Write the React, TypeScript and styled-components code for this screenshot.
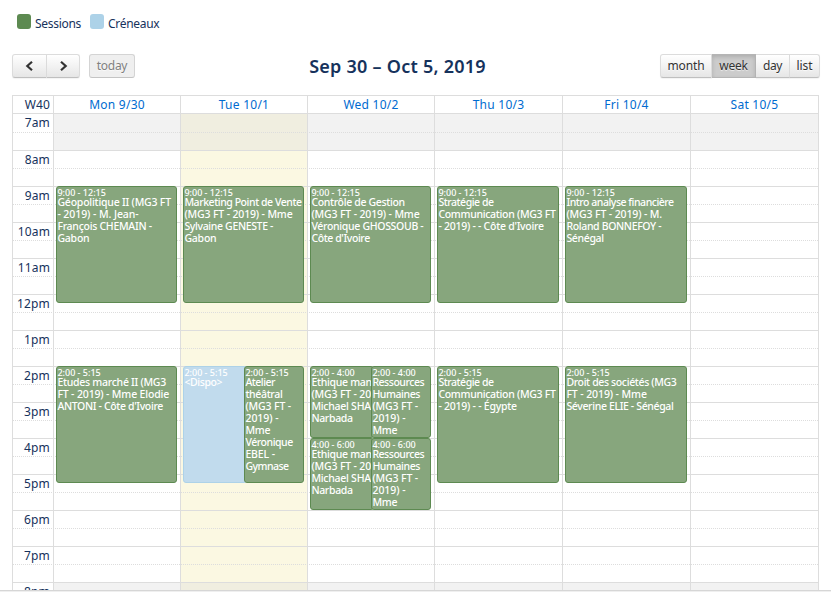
import React from "react";
import styled, { createGlobalStyle, css } from "styled-components";

const GlobalStyle = createGlobalStyle`
  * { box-sizing: border-box; }
  html, body { margin: 0; height: 592px; overflow: hidden; background: #fff; }
  body { font-family: "Noto Sans", "Open Sans", sans-serif; font-size: 13px; line-height: 18px; color: #16325c; }
`;

const Page = styled.main`
  width: 831px;
  height: 592px;
  overflow: hidden;
  display: flex;
  flex-direction: column;
`;

const BottomEdge = styled.div`
  flex: none;
  height: 2px;
  background: linear-gradient(#d6d6d6 1px, #efefef 1px);
`;

const Legend = styled.div`
  display: flex;
  gap: 9px;
  padding: 14px 0 0 17px;
  height: 54px;
  flex: none;
  font-size: 12px;
  line-height: 19px;
  letter-spacing: -0.3px;
`;

const LegendItem = styled.div<{ $w: number }>`
  display: flex;
  gap: 4px;
  width: ${(p) => p.$w}px;
  white-space: nowrap;
`;

const Swatch = styled.i<{ $color: string }>`
  flex: none;
  width: 14px;
  height: 15px;
  border-radius: 3px;
  background: ${(p) => p.$color};
`;

const Toolbar = styled.header`
  display: flex;
  justify-content: space-between;
  flex: none;
  height: 41px;
  padding: 0 11px 0 12px;
`;

const ButtonGroup = styled.div`
  display: flex;
`;

const Button = styled.button<{ $w: number; $active?: boolean; $first?: boolean; $last?: boolean; $ls?: number }>`
  width: ${(p) => p.$w}px;
  height: 24px;
  padding: 0;
  display: flex;
  align-items: center;
  justify-content: center;
  font: 12px/18px "Noto Sans", sans-serif;
  letter-spacing: ${(p) => p.$ls ?? 0}px;
  color: #333;
  text-shadow: 0 1px 1px rgba(255, 255, 255, 0.75);
  border: 1px solid;
  border-color: #dcdcdc #dcdcdc #bfbfbf;
  border-left-width: ${(p) => (p.$first ? 1 : 0)}px;
  border-radius: ${(p) => `${p.$first ? 3 : 0}px ${p.$last ? 3 : 0}px ${p.$last ? 3 : 0}px ${p.$first ? 3 : 0}px`};
  background: linear-gradient(#fff, #e6e6e6);
  box-shadow: inset 0 1px 0 rgba(255, 255, 255, 0.2), 0 1px 1px rgba(0, 0, 0, 0.05);
  ${(p) => p.$active && css`
    background: #ccc;
    border-color: #b5b5b5;
    box-shadow: inset 0 2px 4px rgba(0, 0, 0, 0.15);
  `}
  &:disabled {
    margin-left: 9px;
    color: #808080;
    background: #efefef;
    border-color: #d4d4d4 #d4d4d4 #c4c4c4;
    box-shadow: none;
  }
`;

const Title = styled.h2`
  margin: 0;
  font-size: 18px;
  font-weight: 600;
  line-height: 25px;
  letter-spacing: 0.25px;
  white-space: nowrap;
`;

const Calendar = styled.section`
  width: 807px;
  height: 495px;
  margin-left: 12px;
  flex: none;
  border: 1px solid #ddd;
  border-bottom: 0;
`;

const columns = "40px 127px 127px 127px 128px 128px 128px";

const HeadRow = styled.div`
  display: grid;
  grid-template-columns: ${columns};
  height: 18px;
  border-bottom: 1px solid #ddd;
`;

const HeadCell = styled.div<{ $axis?: boolean }>`
  text-align: ${(p) => (p.$axis ? "right" : "center")};
  padding-right: ${(p) => (p.$axis ? 3 : 0)}px;
  border-left: ${(p) => (p.$axis ? 0 : 1)}px solid #ddd;
  color: ${(p) => (p.$axis ? "#16325c" : "#006bd0")};
  font-size: 12px;
  line-height: 17px;
  letter-spacing: ${(p) => (p.$axis ? 0.1 : 0.25)}px;
  white-space: nowrap;
`;

const Body = styled.div`
  position: relative;
  z-index: 0;
  height: 476px;
  overflow: hidden;
`;

const Hour = styled.div<{ $first?: boolean }>`
  height: 36px;
  border-top: ${(p) => (p.$first ? 0 : 1)}px solid #ddd;
`;

const HourLabel = styled.div<{ $first?: boolean }>`
  width: 40px;
  height: ${(p) => (p.$first ? 18 : 17)}px;
  padding-right: 3px;
  text-align: right;
  font-size: 12px;
  line-height: ${(p) => (p.$first ? 17 : 18)}px;
  letter-spacing: 0.15px;
`;

const HalfLine = styled.div`
  border-top: 1px dotted #ddd;
`;

const Layer = styled.div<{ $front?: boolean }>`
  position: absolute;
  inset: 0;
  z-index: ${(p) => (p.$front ? 1 : -1)};
  display: grid;
  grid-template-columns: ${columns};
  grid-template-rows: 476px;
`;

const DayBackground = styled.div<{ $today?: boolean }>`
  border-left: 1px solid #ddd;
  background: ${(p) =>
    p.$today
      ? "linear-gradient(#f0eee0 36px, #fbf8e2 36px, #fbf8e2 468px, #f0eee0 468px)"
      : "linear-gradient(#f2f2f2 36px, #fff 36px, #fff 468px, #f2f2f2 468px)"};
`;

const DayEvents = styled.div`
  display: grid;
  grid-template-columns: 61px minmax(0, 1fr);
  grid-auto-rows: 9px;
  padding: 0 3px;
`;

const Event = styled.article<{ $from: number; $span: number; $side?: "left" | "right"; $free?: boolean }>`
  grid-row: ${(p) => p.$from + 1} / span ${(p) => p.$span};
  grid-column: ${(p) => (p.$side === "left" ? "1" : p.$side === "right" ? "2" : "1 / -1")};
  margin-right: ${(p) => (p.$side === "left" ? -3 : 0)}px;
  min-width: 0;
  overflow: hidden;
  padding: 0 0 0 0.4px;
  border: 1px solid ${(p) => (p.$free ? "#add2e8" : "#5d8a51")};
  border-radius: 3px;
  background: ${(p) => (p.$free ? "#c1dbed" : "#87a67d")};
  color: #fff;
  font-size: 10.5px;
  font-weight: 500;
  line-height: 12px;
  white-space: nowrap;
  z-index: ${(p) => (p.$side === "right" ? 2 : 1)};
`;

const Time = styled.div`
  font-size: 9px;
  line-height: 11px;
  height: 9px;
`;

const Line = styled.div<{ $ls: number }>`
  letter-spacing: ${(p) => p.$ls - 0.02}px;
`;

type Item = { from: number; span: number; time: string; lines: [string, number][]; side?: "left" | "right"; free?: boolean };

const ethics: [string, number][] = [["Ethique man", -0.28], ["(MG3 FT - 20", -0.14], ["Michael SHA", -0.24], ["Narbada", -0.32]];
const resources: [string, number][] = [["Ressources", -0.45], ["Humaines", -0.4], ["(MG3 FT -", -0.12], ["2019) -", 0], ["Mme", -0.2]];

const days: { name: string; today?: boolean; items: Item[] }[] = [
  { name: "Mon 9/30", items: [
    { from: 8, span: 13, time: "9:00 - 12:15", lines: [["Géopolitique II (MG3 FT", -0.19], ["- 2019) - M. Jean-", -0.05], ["François CHEMAIN -", -0.26], ["Gabon", -0.2]] },
    { from: 28, span: 13, time: "2:00 - 5:15", lines: [["Etudes marché II (MG3", -0.25], ["FT - 2019) - Mme Elodie", -0.13], ["ANTONI - Côte d'Ivoire", -0.33]] },
  ] },
  { name: "Tue 10/1", today: true, items: [
    { from: 8, span: 13, time: "9:00 - 12:15", lines: [["Marketing Point de Vente", -0.42], ["(MG3 FT - 2019) - Mme", -0.13], ["Sylvaine GENESTE -", -0.33], ["Gabon", -0.2]] },
    { from: 28, span: 13, time: "2:00 - 5:15", side: "left", free: true, lines: [["<Dispo>", -0.37]] },
    { from: 28, span: 13, time: "2:00 - 5:15", side: "right", lines: [["Atelier", -0.48], ["théâtral", -0.32], ["(MG3 FT -", -0.12], ["2019) -", 0], ["Mme", -0.2], ["Véronique", -0.43], ["EBEL -", -0.1], ["Gymnase", -0.5]] },
  ] },
  { name: "Wed 10/2", items: [
    { from: 8, span: 13, time: "9:00 - 12:15", lines: [["Contrôle de Gestion", -0.32], ["(MG3 FT - 2019) - Mme", -0.13], ["Véronique GHOSSOUB -", -0.3], ["Côte d'Ivoire", -0.38]] },
    { from: 28, span: 8, time: "2:00 - 4:00", side: "left", lines: ethics },
    { from: 28, span: 8, time: "2:00 - 4:00", side: "right", lines: resources },
    { from: 36, span: 8, time: "4:00 - 6:00", side: "left", lines: ethics },
    { from: 36, span: 8, time: "4:00 - 6:00", side: "right", lines: resources },
  ] },
  { name: "Thu 10/3", items: [
    { from: 8, span: 13, time: "9:00 - 12:15", lines: [["Stratégie de", -0.45], ["Communication (MG3 FT", -0.28], ["- 2019) - - Côte d'Ivoire", -0.24]] },
    { from: 28, span: 13, time: "2:00 - 5:15", lines: [["Stratégie de", -0.45], ["Communication (MG3 FT", -0.28], ["- 2019) - - Égypte", -0.22]] },
  ] },
  { name: "Fri 10/4", items: [
    { from: 8, span: 13, time: "9:00 - 12:15", lines: [["Intro analyse financière", -0.45], ["(MG3 FT - 2019) - M.", -0.11], ["Roland BONNEFOY -", -0.33], ["Sénégal", -0.32]] },
    { from: 28, span: 13, time: "2:00 - 5:15", lines: [["Droit des sociétés (MG3", -0.34], ["FT - 2019) - Mme", -0.08], ["Séverine ELIE - Sénégal", -0.34]] },
  ] },
  { name: "Sat 10/5", items: [] },
];

const hours = ["7am", "8am", "9am", "10am", "11am", "12pm", "1pm", "2pm", "3pm", "4pm", "5pm", "6pm", "7pm", "8pm"];

const Chevron = ({ d }: { d: string }) => (
  <svg width="10" height="12" viewBox="0 0 10 12" fill="none" stroke="#333" strokeWidth="2.2">
    <path d={d} />
  </svg>
);

export default function App() {
  return (
    <Page>
      <GlobalStyle />
      <Legend>
        <LegendItem $w={64}><Swatch $color="#5d8a51" />Sessions</LegendItem>
        <LegendItem $w={72}><Swatch $color="#add2e8" />Créneaux</LegendItem>
      </Legend>
      <Toolbar>
        <ButtonGroup>
          <Button $w={35} $first aria-label="Previous"><Chevron d="M7 1.8 2.3 6 7 10.2" /></Button>
          <Button $w={33} $last aria-label="Next"><Chevron d="M3 1.8 7.7 6 3 10.2" /></Button>
          <Button $w={46} $first $last $ls={-0.3} disabled>today</Button>
        </ButtonGroup>
        <Title>Sep 30 – Oct 5, 2019</Title>
        <ButtonGroup>
          <Button $w={52} $first $ls={-0.1}>month</Button>
          <Button $w={44} $active $ls={-0.2}>week</Button>
          <Button $w={34} $ls={-0.5}>day</Button>
          <Button $w={30} $last $ls={-0.1}>list</Button>
        </ButtonGroup>
      </Toolbar>
      <Calendar>
        <HeadRow>
          <HeadCell $axis>W40</HeadCell>
          {days.map((d) => <HeadCell key={d.name}>{d.name}</HeadCell>)}
        </HeadRow>
        <Body>
          <Layer>
            <span />
            {days.map((d) => <DayBackground key={d.name} $today={d.today} />)}
          </Layer>
          {hours.map((h, i) => (
            <Hour key={h} $first={i === 0}>
              <HourLabel $first={i === 0}>{h}</HourLabel>
              <HalfLine />
            </Hour>
          ))}
          <Layer $front>
            <span />
            {days.map((d) => (
              <DayEvents key={d.name}>
                {d.items.map((e, i) => (
                  <Event key={i} $from={e.from} $span={e.span} $side={e.side} $free={e.free}>
                    <Time>{e.time}</Time>
                    {e.lines.map(([text, ls]) => <Line key={text} $ls={ls}>{text}</Line>)}
                  </Event>
                ))}
              </DayEvents>
            ))}
          </Layer>
        </Body>
      </Calendar>
      <BottomEdge />
    </Page>
  );
}
